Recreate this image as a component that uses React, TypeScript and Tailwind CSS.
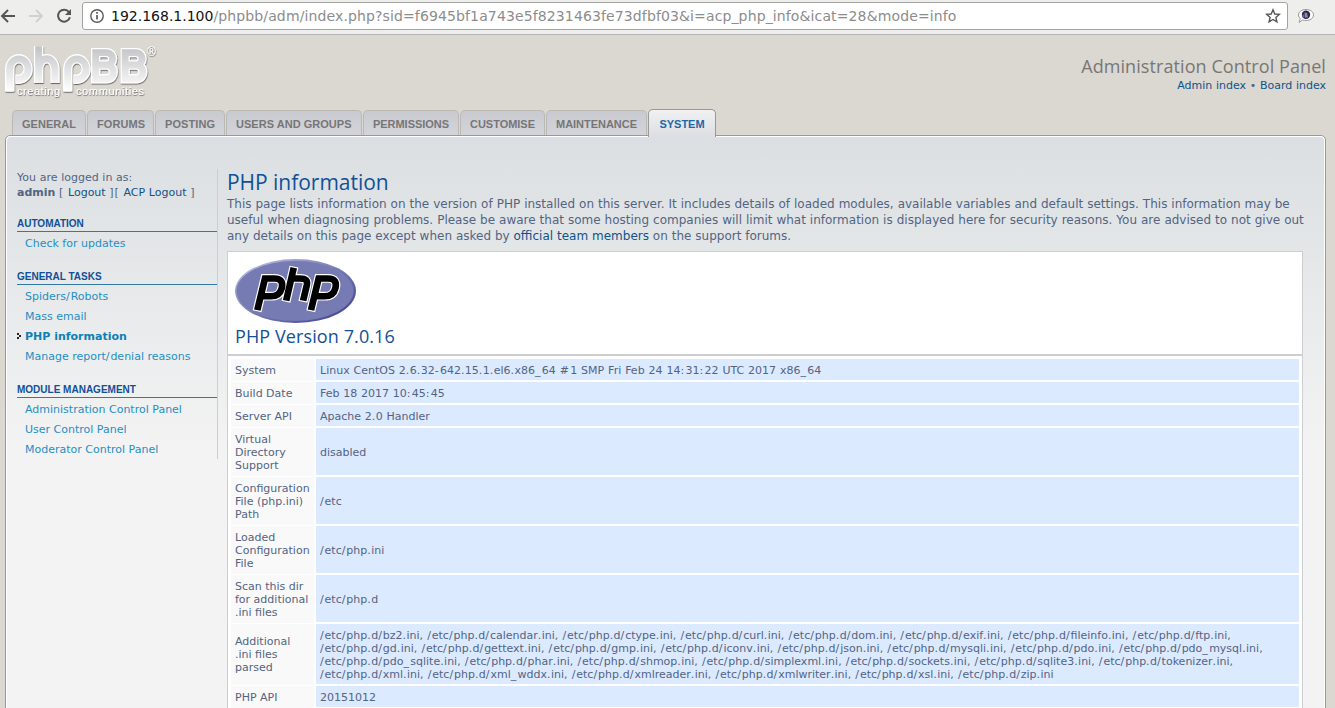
import React from 'react';

const tabs = [
  { label: 'GENERAL', w: 'w-[74px]', t: 54 },
  { label: 'FORUMS', w: 'w-[67px]', t: 48 },
  { label: 'POSTING', w: 'w-[70px]', t: 50 },
  { label: 'USERS AND GROUPS', w: 'w-[136px]', t: 115.5 },
  { label: 'PERMISSIONS', w: 'w-[96px]', t: 76 },
  { label: 'CUSTOMISE', w: 'w-[85px]', t: 65 },
  { label: 'MAINTENANCE', w: 'w-[101px]', t: 81 },
];

const groups = [
  { title: 'AUTOMATION', items: ['Check for updates'] },
  { title: 'GENERAL TASKS', items: ['Spiders/Robots', 'Mass email', 'PHP information', 'Manage report/denial reasons'] },
  { title: 'MODULE MANAGEMENT', items: ['Administration Control Panel', 'User Control Panel', 'Moderator Control Panel'] },
];

const rows: { k: string[]; v: string[] }[] = [
  { k: ['System'], v: ['Linux CentOS 2.6.32-642.15.1.el6.x86_64 #1 SMP Fri Feb 24 14:31:22 UTC 2017 x86_64'] },
  { k: ['Build Date'], v: ['Feb 18 2017 10:45:45'] },
  { k: ['Server API'], v: ['Apache 2.0 Handler'] },
  { k: ['Virtual', 'Directory', 'Support'], v: ['disabled'] },
  { k: ['Configuration', 'File (php.ini)', 'Path'], v: ['/etc'] },
  { k: ['Loaded', 'Configuration', 'File'], v: ['/etc/php.ini'] },
  { k: ['Scan this dir', 'for additional', '.ini files'], v: ['/etc/php.d'] },
  {
    k: ['Additional', '.ini files', 'parsed'],
    v: [
      '/etc/php.d/bz2.ini, /etc/php.d/calendar.ini, /etc/php.d/ctype.ini, /etc/php.d/curl.ini, /etc/php.d/dom.ini, /etc/php.d/exif.ini, /etc/php.d/fileinfo.ini, /etc/php.d/ftp.ini,',
      '/etc/php.d/gd.ini, /etc/php.d/gettext.ini, /etc/php.d/gmp.ini, /etc/php.d/iconv.ini, /etc/php.d/json.ini, /etc/php.d/mysqli.ini, /etc/php.d/pdo.ini, /etc/php.d/pdo_mysql.ini,',
      '/etc/php.d/pdo_sqlite.ini, /etc/php.d/phar.ini, /etc/php.d/shmop.ini, /etc/php.d/simplexml.ini, /etc/php.d/sockets.ini, /etc/php.d/sqlite3.ini, /etc/php.d/tokenizer.ini,',
      '/etc/php.d/xml.ini, /etc/php.d/xml_wddx.ini, /etc/php.d/xmlreader.ini, /etc/php.d/xmlwriter.ini, /etc/php.d/xsl.ini, /etc/php.d/zip.ini',
    ],
  },
  { k: ['PHP API'], v: ['20151012'] },
];

/* Gives punctuation a slightly wider advance than the font's own. */
function Wide({ text }: { text: string }) {
  return (
    <>
      {text.split(/([/_:#-]|[.,]|[[\]])/).map((s, i) => {
        if (i % 2 === 0) return s;
        const c = s === '.' || s === ',' ? 'tracking-[0.4px]' : s === '[' || s === ']' ? 'tracking-[0.9px]' : s === '/' ? 'tracking-[0.88px]' : 'tracking-[1.3px]';
        return <span key={i} className={c}>{s}</span>;
      })}
    </>
  );
}

function Toolbar() {
  return (
    <div className="flex h-[35px] shrink-0 items-start border-b border-[#b4b6b6] bg-[#eeeeec] pt-0.5">
      <svg width="82" height="28" viewBox="0 2 82 28" className="shrink-0" fill="none">
        <path d="M15 16H2.5M8 10l-6 6 6 6" stroke="#555" strokeWidth="1.9" />
        <path d="M29 16h12.5M36 10l6 6-6 6" stroke="#d0d0ce" strokeWidth="1.9" />
        <path d="M69 12.2a6 6 0 1 0 .9 5" stroke="#555" strokeWidth="2" />
        <path d="M71 9v6h-6z" fill="#555" />
      </svg>
      <div className="flex h-7 w-[1206px] items-center rounded-[3px] border border-[#a3a4a2] bg-white">
        <svg width="28" height="26" viewBox="0 0 28 26" className="shrink-0" fill="none">
          <circle cx="14" cy="13" r="6.2" stroke="#5a5a5a" strokeWidth="1.4" />
          <path d="M14 12v4.5M14 9v1.7" stroke="#5a5a5a" strokeWidth="1.7" />
        </svg>
        <span className="flex-1 whitespace-pre text-[14px] leading-[26px] tracking-[0.125px] text-[#8c8c8c]">
          <span className="tracking-normal text-[#111]">192.168.1.100</span>/phpbb/adm/index.php?sid=f6945bf1a743e5f8231463fe73dfbf03&amp;i=acp_php_info&amp;icat=28&amp;mode=info
        </span>
        <svg width="28" height="26" viewBox="0 0 28 26" className="shrink-0" fill="none">
          <path d="M14 6.8l1.800 4.200 4.500.4-3.400 3 1 4.400-3.900-2.300-3.900 2.300 1-4.400-3.400-3 4.500-.4z" stroke="#555" strokeWidth="1.400" />
        </svg>
      </div>
      <svg width="30" height="28" viewBox="1288 2 30 28" className="shrink-0">
        <path d="M1306 9.500c4.300 0 7.500 2.300 7.500 5.500s-3.200 5.500-7.500 5.500c-1.200 0-2.300-.2-3.300-.5L1299 22.500l1.300-3.700c-1.200-1-1.800-2.300-1.800-3.800 0-3.200 3.200-5.500 7.500-5.500z" fill="#fff" stroke="#999" strokeWidth="1" />
        <circle cx="1306" cy="14.700" r="4.200" fill="#262a55" />
        <path d="M1304.500 12.500l2.500.5 1 4.500h-3z" fill="#a0867f" />
        <path d="M1302.500 14.500h2v3h-2z" fill="#5a6aa8" />
      </svg>
    </div>
  );
}

const letterP = 'a9.200 10.200 0 1 1 9.200 10.200h-3.500';
const logoPath =
  `M9.700 91.500V69${letterP}` +
  'M38.600 83V46.300M38.600 70c0-15 16.400-15 16.400 0V83' +
  `M67.700 91.500V69${letterP}` +
  'M95.700 52.600h10.500c8.500 0 8.500 12.400 0 12.400h-10.500zm0 12.400h11c8.800 0 8.800 13.800 0 13.800h-11z' +
  'M125.200 52.600h10.500c8.500 0 8.500 12.400 0 12.400h-10.500zm0 12.400h11c8.800 0 8.800 13.800 0 13.800h-11z';

function BoardLogo() {
  return (
    <svg width="160" height="60" viewBox="0 40 160 60" className="block">
      <defs>
        <linearGradient id="lg" x1="0" y1="48" x2="0" y2="90" gradientUnits="userSpaceOnUse">
          <stop offset="0" stopColor="#c4c5c8" />
          <stop offset="1" stopColor="#fdfdfd" />
        </linearGradient>
        <filter id="sh" x="-10%" y="-10%" width="120%" height="130%">
          <feDropShadow dx="0.5" dy="1.100" stdDeviation="0.5" floodColor="#555" floodOpacity="0.800" />
        </filter>
      </defs>
      <g fill="none" filter="url(#sh)">
        <path d={logoPath} stroke="#fff" strokeWidth="9.400" />
        <path d={logoPath} stroke="url(#lg)" strokeWidth="6.800" />
      </g>
      <g fill="#fff" filter="url(#sh)" fontFamily="Liberation Sans, sans-serif">
        <text x="17" y="95" fontSize="11" textLength="43">creating</text>
        <text x="76" y="95" fontSize="11" textLength="68">communities</text>
        <text x="147" y="55.500" fontSize="12">®</text>
      </g>
    </svg>
  );
}

const phpPath =
  'M22.500 50.500L29.500 20.500h9.500c7 0 9 4 7.500 10.200s-5 8.500-11 8.500h-8' +
  'M51.800 40.500l6.200-28M57 20.500h8c6 0 8 2 7 7l-3 13' +
  'M77 50.500L84 20.500h9.500c7 0 9 4 7.500 10.200s-5 8.500-11 8.500h-8';

function PhpLogo() {
  return (
    <svg width="122" height="66" viewBox="0 0 122 66" className="block">
      <defs>
        <linearGradient id="rim" x1="0" y1="0" x2="1" y2="1">
          <stop offset="0.1" stopColor="#b4b7dc" />
          <stop offset="0.500" stopColor="#777bb3" />
          <stop offset="0.900" stopColor="#484893" />
        </linearGradient>
      </defs>
      <ellipse cx="60.500" cy="33" rx="60.500" ry="32" fill="url(#rim)" />
      <ellipse cx="60" cy="33" rx="58.500" ry="30" fill="#777bb3" />
      <g fill="none" strokeLinecap="square">
        <path d={phpPath} stroke="#fff" strokeWidth="9.200" transform="translate(0.900 1) scale(0.985 0.950)" />
        <path d={phpPath} stroke="#000" strokeWidth="6.800" transform="translate(0.900 1) scale(0.985 0.950)" />
      </g>
    </svg>
  );
}

function Sidebar() {
  return (
    <aside className="flex h-[290px] w-[201px] shrink-0 flex-col border-r border-[#ccced2] pt-px text-[11px] text-[#536482] [word-spacing:0.2px]">
      <div className="mb-[17px] h-[30px] leading-[15px]">
        <div>You are logged in as<Wide text=":" /></div>
        <div className="whitespace-pre"><b>admin</b><Wide text=" [ " /><a className="text-[#105289]">Logout</a><Wide text=" ][ " /><a className="text-[#105289]">ACP Logout</a> ]</div>
      </div>
      {groups.map((g) => (
        <div key={g.title} className="mb-[16px]">
          <div className="h-[15px] border-b border-[#327aa5] font-['Liberation_Sans',sans-serif] text-[10px] font-bold leading-[14px] text-[#115098] [word-spacing:0px]">{g.title}</div>
          <ul className="pt-0.5">
            {g.items.map((i) => (
              <li key={i} className={i === 'PHP information' ? 'flex h-5 items-center font-bold text-[#0d81b5] [word-spacing:0px]' : 'flex h-5 items-center text-[#1f8fc4] [word-spacing:0px]'}>
                <svg width="8" height="8" viewBox="0 0 8 8" shapeRendering="crispEdges" className="shrink-0">
                  {i === 'PHP information' && <path d="M0 0h2v2H0zM2 2h2v2H2zM0 4h2v2H0z" fill="#222" />}
                </svg>
                <span className="whitespace-pre"><Wide text={i} /></span>
              </li>
            ))}
          </ul>
        </div>
      ))}
    </aside>
  );
}

export default function App() {
  return (
    <div className="flex h-[708px] w-[1335px] flex-col overflow-hidden bg-[#dbd7d1] font-['DejaVu_Sans',sans-serif]">
      <Toolbar />
      <header className="flex h-[74px] shrink-0 justify-between pr-[9px] pt-[5px]">
        <BoardLogo />
        <div className="pt-[14px] text-right">
          <h1 className="font-['Open_Sans',sans-serif] text-[18px] leading-6 tracking-[0.08px] text-[#777]">Administration Control Panel</h1>
          <p className="pt-px text-[11px] leading-[14px] text-[#536482] [word-spacing:0.2px]"><a className="text-[#105289]">Admin index</a> • <a className="text-[#105289]">Board index</a></p>
        </div>
      </header>
      <nav className="z-10 -mb-0.5 flex h-[28px] shrink-0 items-end gap-px pl-3 font-['Liberation_Sans',sans-serif] text-[11px] font-bold text-[#767676]">
        {tabs.map((t) => (
          <div key={t.label} className={'mb-0.5 flex h-[25px] items-center justify-center rounded-t-[5px] border border-b-0 border-[#bbb9b6] bg-linear-to-b from-[#c9cacf] to-[#d4d5da] pt-0.5 ' + t.w}>
            <svg width={t.t} height="14" className="overflow-visible" fill="currentColor"><text y="11" textLength={t.t}>{t.label}</text></svg>
          </div>
        ))}
        <div className="flex h-[28px] w-[68px] justify-center rounded-t-[5px] border border-b-0 border-[#999] bg-linear-to-b from-[#f1f1f2] to-[#dcdee2] pt-[6px] text-[#2167a5]">
          SYSTEM
        </div>
      </nav>
      <main className="ml-[5px] mr-[9px] flex h-[640px] shrink-0 rounded-[5px] border border-[#999] bg-white p-px">
        <div className="flex flex-1 rounded-[4px] bg-[linear-gradient(#dbdee2_0,#dde1e3_30px,#f3f3f3_310px)] pl-[10px] pt-[32px]">
          <Sidebar />
          <section className="ml-[9px] w-[1080px]">
            <h2 className="font-['Open_Sans',sans-serif] text-[21px] leading-[26px] tracking-[-0.03px] text-[#115098]">PHP information</h2>
            <div className="whitespace-pre pt-px text-[12px] leading-4 text-[#536482] [word-spacing:0.17px]">
              <p>This page lists information on the version of PHP installed on this server. It includes details of loaded modules, available variables and default settings. This information may be</p>
              <p>useful when diagnosing problems. Please be aware that some hosting companies will limit what information is displayed here for security reasons. You are advised to not give out</p>
              <p className="[word-spacing:0.08px]">any details on this page except when asked by <a className="text-[#105289]">official team members</a> on the support forums.</p>
            </div>
            <div className="mt-[7px] w-[1076px] border border-[#ccced2] bg-white">
              <div className="h-[104px] border-b-2 border-[#ccced2] pl-[7px] pt-[6px]">
                <PhpLogo />
                <h3 className="font-['Open_Sans',sans-serif] text-[18px] leading-6 tracking-[0.1px] text-[#115098]">PHP Version 7.0.16</h3>
              </div>
              <div className="flex flex-col gap-0.5 px-[2px] py-[3px] text-[11px] leading-[13px] text-[#536482]">
                {rows.map((r) => (
                  <div key={r.k.join()} className="flex gap-0.5 px-px">
                    <div className="flex w-[83px] flex-col justify-center bg-[#f9f9f9] px-1 pb-[4px] pt-[5px] -my-[0.5px] bg-clip-content-none">{r.k.map((s) => <div key={s} className="whitespace-pre">{s}</div>)}</div>
                    <div className={(r.k[0] === 'System' ? '[word-spacing:0.42px]' : '[word-spacing:0.25px]') + ' flex w-[983px] flex-col justify-center bg-[#dceaff] px-1 pb-[3px] pt-[5px]'}>{r.v.map((s) => <div key={s} className="whitespace-pre"><Wide text={s} /></div>)}</div>
                  </div>
                ))}
              </div>
            </div>
          </section>
        </div>
      </main>
    </div>
  );
}
